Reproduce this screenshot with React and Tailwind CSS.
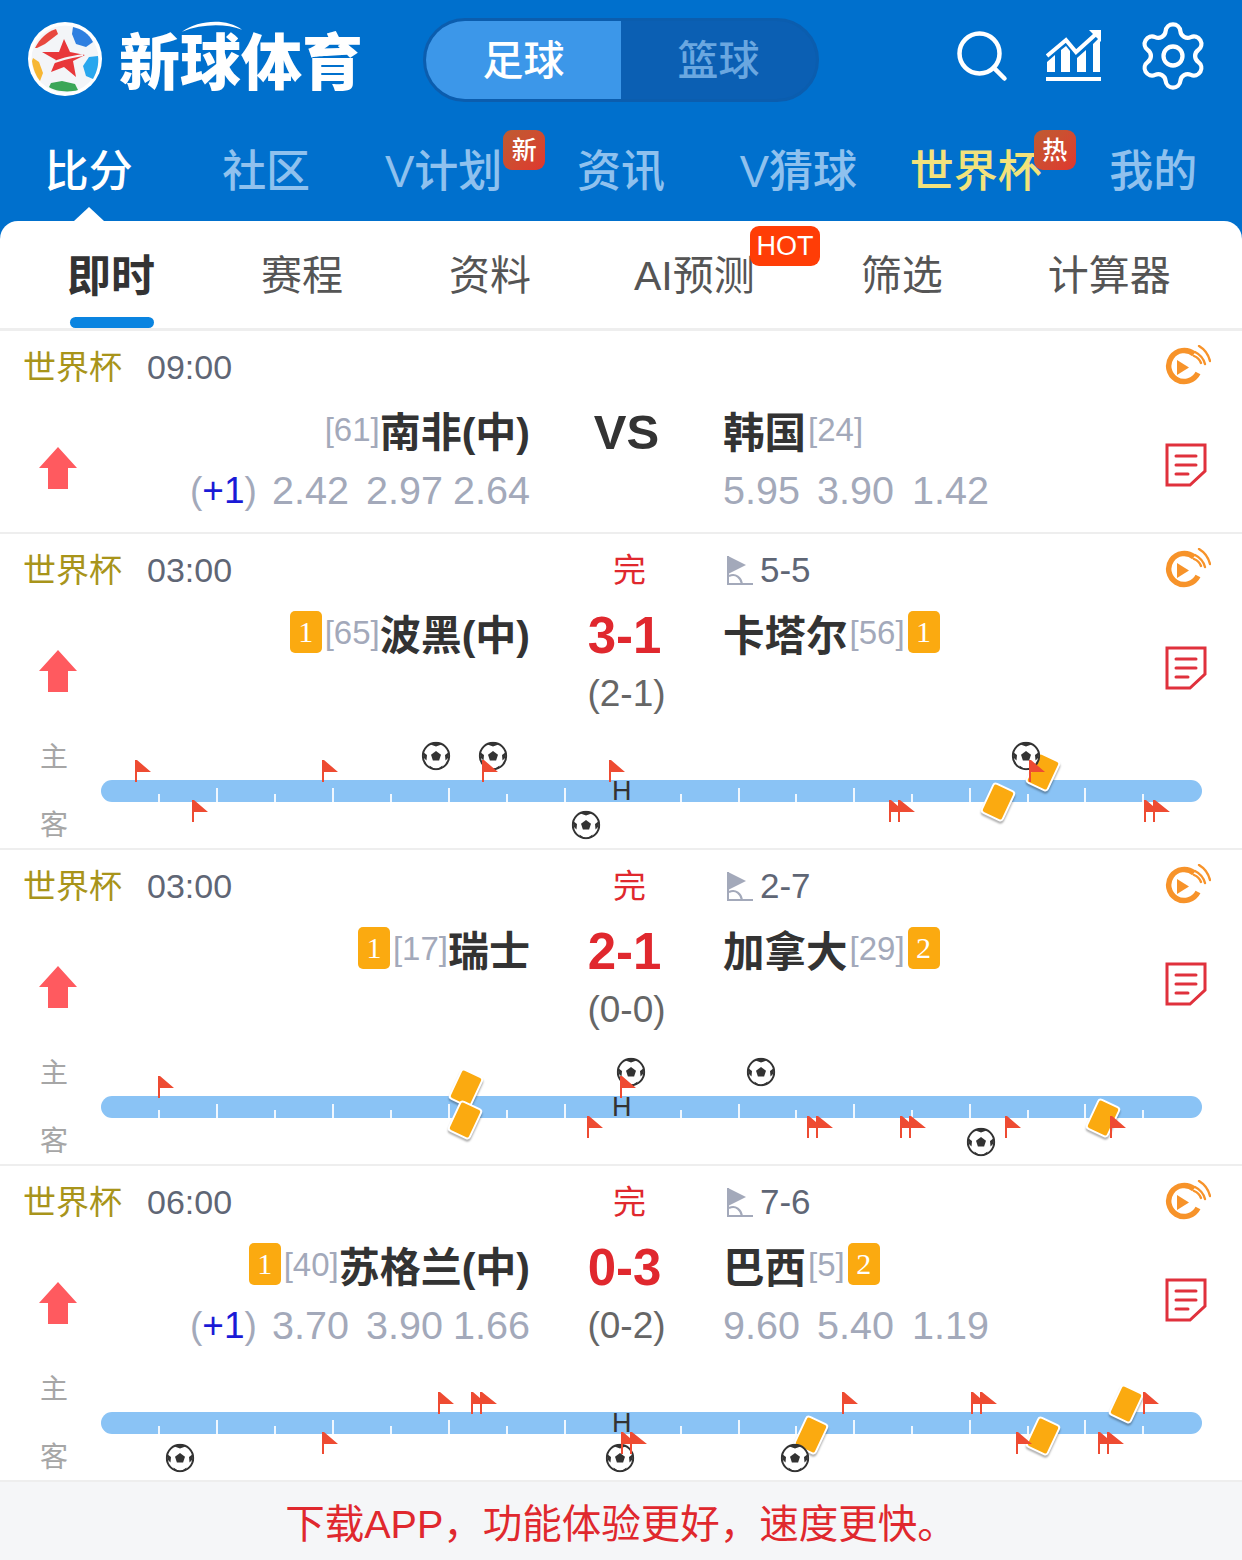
import { Settings, Search } from 'lucide-react';

const NAV = [
  { label: '比分', cls: 'text-white' },
  { label: '社区', cls: 'text-[#8fc1ee]' },
  { label: 'V计划', cls: 'text-[#8fc1ee]', badge: '新', badgeCls: 'right-[-43px]' },
  { label: '资讯', cls: 'text-[#8fc1ee]' },
  { label: 'V猜球', cls: 'text-[#8fc1ee]' },
  { label: '世界杯', cls: 'text-[#f2e27c]', badge: '热', badgeCls: 'right-[-34px]' },
  { label: '我的', cls: 'text-[#8fc1ee]' },
];

const TICKS = [159, 217, 275, 333, 391, 449, 507, 565, 681, 739, 796, 854, 912, 970, 1028, 1085, 1143];

const MATCHES = [
  {
    time: '09:00',
    home: '南非(中)', homeRank: '[61]', away: '韩国', awayRank: '[24]',
    score: 'VS', homeOdds: ['2.42', '2.97', '2.64'], awayOdds: ['5.95', '3.90', '1.42'],
  },
  {
    time: '03:00', status: '完', corner: '5-5',
    home: '波黑(中)', homeRank: '[65]', homeCard: '1', away: '卡塔尔', awayRank: '[56]', awayCard: '1',
    score: '3-1', half: '(2-1)',
    timeline: {
      cards: [[1043, 42], [998, 72]],
      balls: [[436, 26], [493, 26], [1026, 26], [586, 95]],
      flagsTop: [[135], [322], [482], [609], [1029]],
      flagsBottom: [[192], [889, true], [1144, true]],
    },
  },
  {
    time: '03:00', status: '完', corner: '2-7',
    home: '瑞士', homeRank: '[17]', homeCard: '1', away: '加拿大', awayRank: '[29]', awayCard: '2',
    score: '2-1', half: '(0-0)',
    timeline: {
      cards: [[466, 42], [465, 74], [1103, 72]],
      balls: [[631, 26], [761, 26], [981, 96]],
      flagsTop: [[158], [620]],
      flagsBottom: [[587], [807, true], [900, true], [1005], [1110]],
    },
  },
  {
    time: '06:00', status: '完', corner: '7-6',
    home: '苏格兰(中)', homeRank: '[40]', homeCard: '1', away: '巴西', awayRank: '[5]', awayCard: '2',
    score: '0-3', half: '(0-2)', homeOdds: ['3.70', '3.90', '1.66'], awayOdds: ['9.60', '5.40', '1.19'],
    timeline: {
      cards: [[1126, 42], [811, 73], [1043, 74]],
      balls: [[180, 96], [620, 96], [795, 96]],
      flagsTop: [[438], [471, true], [842], [971, true], [1143]],
      flagsBottom: [[322], [621, true], [1016], [1098, true]],
    },
  },
];

function Logo() {
  return (
    <div className="flex items-center">
      <svg width="76" height="76" viewBox="0 0 76 76" className="ml-[27px] shrink-0">
        <circle cx="38" cy="38" r="37" fill="#fff" />
        <circle cx="38" cy="38" r="33.5" fill="#f3f5f8" />
        <path d="M8 27 C13 17 20 11 29 8 L31 13 L18 23 L10 27 Z" fill="#e8483f" />
        <path d="M46 6 C55 8 62 13 66 21 L59 26 L49 23 L45 13 Z" fill="#2f7fe0" />
        <path d="M71 35 C72 43 70 51 66 58 L59 55 L56 45 L62 36 Z" fill="#29a7ee" />
        <path d="M22 66 C27 70 41 72 51 69 L48 63 L35 60 L24 62 Z" fill="#3aa657" />
        <path d="M5 40 C6 48 9 55 13 60 L16 52 L12 41 L6 37 Z" fill="#f7b733" />
        <path d="M37 18 L43 31 L58 34 L46 40 L49 56 L37 46 L24 51 L29 39 L15 31 L32 31 Z" fill="#e8373a" />
        <path d="M21 44 C32 38 44 36 56 34" stroke="#f3f5f8" strokeWidth="2" fill="none" />
      </svg>
      <div className="relative ml-[16px] text-[61px] leading-[76px] font-black tracking-[0px] text-white [font-family:'Noto_Sans_CJK_SC',sans-serif]">
        新球体育
        <svg width="62" height="14" viewBox="0 0 66 14" className="absolute left-[62px] top-[-2px]">
          <path d="M1 13 C18 1 48 -2 65 11 C46 4 22 5 1 13 Z" fill="#fff" />
        </svg>
      </div>
    </div>
  );
}

function ChartIcon() {
  return (
    <svg width="56" height="54" viewBox="0 0 56 54" className="text-white">
      <path d="M1 27 L20 11 L30 23 L50 5" fill="none" stroke="currentColor" strokeWidth="4" />
      <path d="M43 1 L55 1 L55 13 Z" fill="currentColor" />
      <path d="M1 43 L1 33 L9 26 L9 43 Z M15 43 L15 21 L20 17 L24 22 L24 43 Z M31 43 L31 29 L40 21 L40 43 Z M47 43 L47 15 L54 8 L54 43 Z" fill="currentColor" />
      <rect x="0" y="48" width="55" height="4" fill="currentColor" />
    </svg>
  );
}

function Header() {
  return (
    <div className="bg-[#0070cd]">
      <div className="flex h-[118px] items-center">
        <Logo />
        <div className="ml-[60px] mt-[2px] flex h-[84px] w-[396px] overflow-hidden rounded-full border-[3px] border-[#0b5dae] bg-[#0b5fb3] text-[41px] font-medium">
          <div className="flex w-[195px] items-center justify-center bg-[#3c97e9] pt-[4px] text-white">足球</div>
          <div className="flex flex-1 items-center justify-center pt-[4px] text-[#6aa7e0]">篮球</div>
        </div>
        <div className="ml-[133px] flex items-center">
          <div className="mb-[6px]"><Search size={60} strokeWidth={1.8} color="#fff" /></div>
          <div className="mb-[6px] ml-[34px]"><ChartIcon /></div>
          <div className="mb-[6px] ml-[33px]"><Settings size={76} strokeWidth={1.35} color="#fff" /></div>
        </div>
      </div>
      <div className="grid h-[103px] grid-cols-7">
        {NAV.map((item, i) => (
          <div key={item.label} className="relative flex items-center justify-center pt-[5px]">
            <span className={`relative whitespace-nowrap text-[44px] font-medium ${item.cls}`}>
              {item.label}
              {item.badge && (
                <span className={`absolute top-[-9px] flex h-[40px] w-[42px] items-center justify-center rounded-[9px] bg-gradient-to-br from-[#bd5b32] to-[#e0352f] text-[25px] leading-none text-white ${item.badgeCls}`}>
                  {item.badge}
                </span>
              )}
            </span>
            {i === 0 && (
              <span className="absolute bottom-0 left-1/2 h-0 w-0 -translate-x-1/2 border-x-[15px] border-b-[14px] border-x-transparent border-b-white" />
            )}
          </div>
        ))}
      </div>
    </div>
  );
}

function SubTabs() {
  return (
    <div className="bg-[#0070cd]">
      <div className="relative flex h-[107px] items-center gap-[106px] rounded-t-[18px] bg-white pl-[67px] pt-[5px] text-[41px] text-[#555]">
        <span className="text-[44px] font-bold text-[#333]">即时</span>
        <span>赛程</span>
        <span>资料</span>
        <span className="relative ml-[-3px] whitespace-nowrap">
          AI预测
          <span className="absolute left-[116px] top-[-20px] flex h-[40px] w-[70px] items-center justify-center rounded-[9px] bg-[#ff3d06] text-[27px] leading-none text-white">HOT</span>
        </span>
        <span>筛选</span>
        <span className="ml-[-1px]">计算器</span>
        <span className="absolute bottom-0 left-[70px] h-[11px] w-[84px] rounded-full bg-[#0a84e0]" />
      </div>
    </div>
  );
}

function LiveIcon() {
  return (
    <svg width="46" height="42" viewBox="0 0 46 42" fill="none" stroke="#f7932a">
      <path d="M29 9 A15.5 15.5 0 1 0 33 28" strokeWidth="5.5" />
      <path d="M12 15 L24 22.5 L12 30 Z" fill="#f7932a" stroke="none" />
      <path d="M27 14 A12 12 0 0 1 34 21" strokeWidth="2.4" strokeLinecap="round" transform="translate(2 -3)" />
      <path d="M30 7 A19 19 0 0 1 40 19" strokeWidth="2.4" strokeLinecap="round" />
      <path d="M34 1 A24 24 0 0 1 45 16" strokeWidth="2.4" strokeLinecap="round" />
    </svg>
  );
}

function NoteIcon() {
  return (
    <svg width="42" height="44" viewBox="0 0 42 44" fill="none" stroke="#e0313c" strokeWidth="3">
      <path d="M2 2 L40 2 L40 28 L25 42 L2 42 Z" />
      <path d="M11 13 L31 13 M11 22 L31 22 M11 31 L23 31" strokeLinecap="round" />
    </svg>
  );
}

function UpArrow() {
  return (
    <svg width="38" height="42" viewBox="0 0 38 42">
      <path d="M19 0 L38 21 L29 21 L29 42 L9 42 L9 21 L0 21 Z" fill="#ff5a5f" />
    </svg>
  );
}

function CornerIcon() {
  return (
    <svg width="28" height="31" viewBox="0 0 28 31">
      <path d="M2 1 L2 29 L27 29" fill="none" stroke="#a3a9ba" strokeWidth="2" />
      <path d="M2 1 L20 10 L2 19 Z" fill="#a3a9ba" />
      <path d="M3 21 C10 18 15 23 16 29" fill="none" stroke="#a3a9ba" strokeWidth="2" />
    </svg>
  );
}

function Flag({ x, top, double }) {
  return (
    <svg
      width={double ? 27 : 17}
      height="22"
      viewBox={double ? '0 0 27 22' : '0 0 17 22'}
      className={`absolute ${top ? 'top-[30px]' : 'top-[70px]'}`}
      style={{ left: x }}
    >
      <path d="M0 0 L2 0 L2 22 L0 22 Z M2 0 L16 12 L2 12 Z" fill="#ee4b32" />
      {double && <path d="M9 0 L11 0 L11 22 L9 22 Z M11 0 L26 12 L11 12 Z" fill="#ee4b32" />}
    </svg>
  );
}

function Ball({ x, y }) {
  return (
    <svg
      width="29"
      height="29"
      viewBox="0 0 29 29"
      className="absolute -translate-x-1/2 -translate-y-1/2"
      style={{ left: x, top: y }}
    >
      <circle cx="14.5" cy="14.5" r="13.2" fill="#fff" stroke="#333" strokeWidth="2" />
      <path d="M14.5 9.5 L19.5 13.2 L17.6 19 L11.4 19 L9.5 13.2 Z" fill="#333" />
      <path d="M9 3 L14.5 5 L20 3 L17 1 L12 1 Z M2.2 11 L5.5 13.5 L5 19 L2 16 Z M26.8 11 L23.5 13.5 L24 19 L27 16 Z M8 24 L13 27.5 L8.5 26.5 Z M21 24 L16 27.5 L20.5 26.5 Z" fill="#333" />
    </svg>
  );
}

function YellowCard({ x, y }) {
  return (
    <span
      className="absolute h-[34px] w-[25px] -translate-x-1/2 -translate-y-1/2 rotate-[25deg] rounded-[4px] border-[2px] border-white bg-[#fbaa10] shadow-[1px_2px_2px_rgba(0,0,0,0.3)]"
      style={{ left: x, top: y }}
    />
  );
}

function Timeline({ data }) {
  return (
    <div className="relative mt-[7px] h-[118px]">
      <span className="absolute left-[40px] top-[10px] pt-[2px] text-[28px] leading-[32px] text-[#a6a6a6]">主</span>
      <span className="absolute left-[40px] top-[78px] pt-[2px] text-[28px] leading-[32px] text-[#a6a6a6]">客</span>
      <div className="absolute left-[101px] top-[50px] h-[22px] w-[1101px] rounded-full bg-[#8ac3f5]" />
      {TICKS.map((x, i) => (
        <span
          key={x}
          className={`absolute w-[2px] bg-[#f0f7fe] ${i % 2 === 0 ? 'top-[64px] h-[8px]' : 'top-[58px] h-[14px]'}`}
          style={{ left: x - 1 }}
        />
      ))}
      <span className="absolute left-[612px] top-[46px] text-[27px] leading-[30px] text-[#333]">H</span>
      {data.cards.map(([x, y]) => <YellowCard key={`${x}-${y}`} x={x} y={y} />)}
      {data.balls.map(([x, y]) => <Ball key={`${x}-${y}`} x={x} y={y} />)}
      {data.flagsTop.map(([x, d]) => <Flag key={x} x={x} top double={d} />)}
      {data.flagsBottom.map(([x, d]) => <Flag key={x} x={x} double={d} />)}
    </div>
  );
}

function CardBadge({ value }) {
  return (
    <span className="mb-[8px] flex h-[42px] w-[32px] items-center justify-center rounded-[5px] bg-[#fbaa10] text-[30px] leading-none text-white [font-family:'Liberation_Serif',serif]">
      {value}
    </span>
  );
}

function MatchRow({ m }) {
  const hasTimeline = !!m.timeline;
  return (
    <div className={`border-b-[2px] border-[#eeeeee] ${hasTimeline ? '' : 'pb-[12px]'}`}>
      <div className="flex h-[73px] items-center">
        <div className="flex w-[530px] items-center pl-[23px]">
          <span className="w-[124px] text-[33px] text-[#a8941a]">世界杯</span>
          <span className="text-[34px] text-[#5f6675]">{m.time}</span>
        </div>
        <div className="w-[193px] pl-[6px] text-center text-[33px] text-[#e0282e]">{m.status}</div>
        <div className="flex flex-1 items-center">
          {m.corner && (
            <>
              <span className="ml-[3px]"><CornerIcon /></span>
              <span className="ml-[6px] text-[35px] text-[#5f6675]">{m.corner}</span>
            </>
          )}
        </div>
        <div className="mb-[3px] mr-[31px]"><LiveIcon /></div>
      </div>
      <div className="flex">
        <div className="flex w-[116px] justify-center pt-[43px]"><UpArrow /></div>
        <div className="w-[414px]">
          <div className="flex h-[58px] items-center justify-end">
            {m.homeCard && <CardBadge value={m.homeCard} />}
            <span className="mb-[6px] ml-[3px] text-[33px] text-[#a3a9ba]">{m.homeRank}</span>
            <span className="mt-[2px] text-[41px] font-bold text-[#333]">{m.home}</span>
          </div>
          {m.homeOdds && (
            <div className="flex h-[58px] items-center justify-end text-[39.5px] text-[#a3a9ba]">
              <span className="w-[82px] text-[37px]">(<span className="text-[#1a1ad6]">+1</span>)</span>
              <span className="w-[94px]">{m.homeOdds[0]}</span>
              <span className="w-[87px]">{m.homeOdds[1]}</span>
              <span className="w-[77px] text-right">{m.homeOdds[2]}</span>
            </div>
          )}
        </div>
        <div className="w-[193px] text-center">
          <div className={`flex h-[58px] items-center justify-center font-bold ${m.score === 'VS' ? 'text-[49px] text-[#333]' : 'pr-[4px] text-[51px] text-[#e0282e]'}`}>
            {m.score}
          </div>
          {m.half && <div className="flex h-[58px] items-center justify-center text-[37px] text-[#666]">{m.half}</div>}
        </div>
        <div className="flex-1">
          <div className="flex h-[58px] items-center">
            <span className="mt-[2px] text-[41.5px] font-bold text-[#333]">{m.away}</span>
            <span className="mb-[6px] ml-[2px] text-[33px] text-[#a3a9ba]">{m.awayRank}</span>
            {m.awayCard && <span className="ml-[3px]"><CardBadge value={m.awayCard} /></span>}
          </div>
          {m.awayOdds && (
            <div className="flex h-[58px] items-center text-[39.5px] text-[#a3a9ba]">
              <span className="w-[94px]">{m.awayOdds[0]}</span>
              <span className="w-[95px]">{m.awayOdds[1]}</span>
              <span>{m.awayOdds[2]}</span>
            </div>
          )}
        </div>
        <div className="mr-[35px] pt-[39px]"><NoteIcon /></div>
      </div>
      {hasTimeline && <Timeline data={m.timeline} />}
    </div>
  );
}

export default function App() {
  return (
    <div className="h-[1560px] w-[1242px] overflow-hidden bg-white [font-family:'Liberation_Sans','Noto_Sans_CJK_SC',sans-serif]">
      <div className="h-[118px]"><Header /></div>
      <div className="mt-[103px]"><SubTabs /></div>
      <div className="h-[3px] bg-[#eeeeee]" />
      {MATCHES.map((m, i) => <MatchRow key={i} m={m} />)}
      <div className="flex h-[78px] items-center justify-center bg-[#f5f6f8] pt-[8px] text-[39.5px] text-[#e0282e]">
        下载APP，功能体验更好，速度更快。
      </div>
    </div>
  );
}
